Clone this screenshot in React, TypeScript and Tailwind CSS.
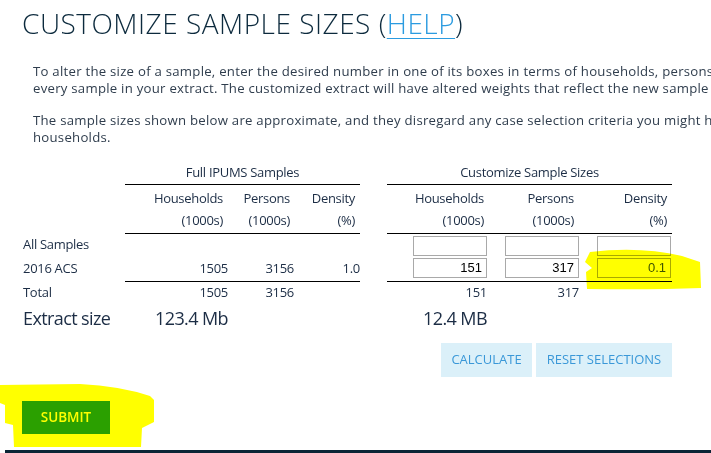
import React from "react";

const Hl = () => (
  <svg className="absolute left-0 top-0 pointer-events-none mix-blend-multiply" width="711" height="453" viewBox="0 0 711 453">
    <path d="M0,385 L80,384 Q120,386 150,396 L154,400 L154,422 L142,428 L141,447 L14,447 L13,425 L5,423 L5,405 L0,403 Z" fill="#ffff00" />
    <path d="M590,252 Q640,246 682,256 L700,262 L701,288 Q650,290 587,289 L586,272 L592,268 L585,262 Z" fill="#ffff00" />
  </svg>
);

const Inp = ({ v }: { v?: string }) => (
  <div className="w-[74px] h-[20px] border border-[#a9a9a9] bg-white text-right pr-[4px] text-[13px] leading-[18px] tracking-normal text-black font-['Liberation_Sans',sans-serif]">
    {v}
  </div>
);

export default function App() {
  return (
    <div className="relative w-[711px] h-[453px] overflow-hidden bg-white font-['Open_Sans',sans-serif] text-[#1c2d45]">
      <h1 className="pl-[22px] pt-[5px] text-[28px] leading-[36px] font-[350] text-[#0c2a3d] whitespace-nowrap tracking-[0.5px]">
        CUSTOMIZE SAMPLE SIZES (<span className="text-[#2b9be0] underline decoration-1 underline-offset-[4px]">HELP</span>)
      </h1>
      <div className="pl-[33px] mt-[22px] text-[13.2px] leading-[17px] text-[#2f3d4d] whitespace-nowrap tracking-[0.25px]">
        <p>To alter the size of a sample, enter the desired number in one of its boxes in terms of households, persons, or density. You must customize</p>
        <p>every sample in your extract. The customized extract will have altered weights that reflect the new sample sizes.</p>
        <p className="mt-[15px]">The sample sizes shown below are approximate, and they disregard any case selection criteria you might have applied to persons or</p>
        <p>households.</p>
      </div>

      <div className="ml-[23px] mt-[14px] text-[13px] tracking-[-0.3px]">
        {/* group titles */}
        <div className="flex h-[25px]">
          <div className="w-[102px]" />
          <div className="w-[235px] border-b border-black text-center leading-[24px]">Full IPUMS Samples</div>
          <div className="w-[27px]" />
          <div className="w-[285px] border-b border-black text-center leading-[24px]">Customize Sample Sizes</div>
        </div>
        {/* column headers */}
        <div className="flex h-[49px] leading-[22px]">
          <div className="w-[102px]" />
          <div className="w-[235px] border-b border-black flex pt-[2px]">
            <div className="w-[103px] text-right pr-[5px]">Households<br />(1000s)</div>
            <div className="w-[66px] text-right pr-[4px]">Persons<br />(1000s)</div>
            <div className="w-[66px] text-right pr-[5px]">Density<br />(%)</div>
          </div>
          <div className="w-[27px]" />
          <div className="w-[285px] border-b border-black flex pt-[2px]">
            <div className="w-[100px] text-right pr-[3px]">Households<br />(1000s)</div>
            <div className="w-[92px] text-right pr-[5px]">Persons<br />(1000s)</div>
            <div className="w-[93px] text-right pr-[5px]">Density<br />(%)</div>
          </div>
        </div>
        {/* All samples */}
        <div className="flex h-[23px] items-start">
          <div className="w-[102px] leading-[18px] pt-[1px]">All Samples</div>
          <div className="w-[235px]" />
          <div className="w-[27px]" />
          <div className="w-[285px] flex pt-[2px]">
            <div className="w-[100px] flex justify-end"><Inp /></div>
            <div className="w-[92px] flex justify-end"><Inp /></div>
            <div className="w-[92px] flex justify-end"><Inp /></div>
          </div>
        </div>
        {/* 2016 ACS */}
        <div className="flex h-[25px]">
          <div className="w-[102px] leading-[22px]">2016 ACS</div>
          <div className="w-[235px] border-b border-black flex leading-[22px]">
            <div className="w-[103px] text-right">1505</div>
            <div className="w-[66px] text-right">3156</div>
            <div className="w-[66px] text-right">1.0</div>
          </div>
          <div className="w-[27px]" />
          <div className="w-[285px] border-b border-black flex pt-[1px]">
            <div className="w-[100px] flex justify-end"><Inp v="151" /></div>
            <div className="w-[92px] flex justify-end"><Inp v="317" /></div>
            <div className="w-[92px] flex justify-end">
              <div className="w-[74px] h-[20px] border border-[#a9a9a9] bg-white text-right pr-[4px] text-[13px] leading-[18px] tracking-normal text-[#3f5400] font-['Liberation_Sans',sans-serif]">0.1</div>
            </div>
          </div>
        </div>
        {/* Total */}
        <div className="flex h-[20px] leading-[20px]">
          <div className="w-[102px]">Total</div>
          <div className="w-[235px] flex">
            <div className="w-[103px] text-right">1505</div>
            <div className="w-[66px] text-right">3156</div>
          </div>
          <div className="w-[27px]" />
          <div className="w-[285px] flex">
            <div className="w-[100px] text-right">151</div>
            <div className="w-[92px] text-right">317</div>
          </div>
        </div>
        {/* Extract size */}
        <div className="flex h-[32px] items-center text-[18px] tracking-[-0.6px]">
          <div className="w-[102px] whitespace-nowrap">Extract size</div>
          <div className="w-[103px] text-right whitespace-nowrap">123.4 Mb</div>
          <div className="w-[132px]" />
          <div className="w-[27px]" />
          <div className="w-[100px] text-right whitespace-nowrap">12.4 MB</div>
        </div>
      </div>

      <div className="flex justify-end gap-[4px] pr-[39px] mt-[9px] text-[13px] text-[#3a98d8]">
        <div className="w-[91px] h-[34px] bg-[#dbf0f9] flex items-center justify-center">CALCULATE</div>
        <div className="w-[136px] h-[34px] bg-[#dbf0f9] flex items-center justify-center">RESET SELECTIONS</div>
      </div>

      <div className="ml-[22px] mt-[24px] w-[88px] h-[33px] bg-[#2ba000] text-white text-[13.5px] font-semibold flex items-center justify-center">
        SUBMIT
      </div>

      <div className="ml-[5px] mt-[16px] h-[4px] bg-[#0b2536]" />

      <Hl />
    </div>
  );
}
